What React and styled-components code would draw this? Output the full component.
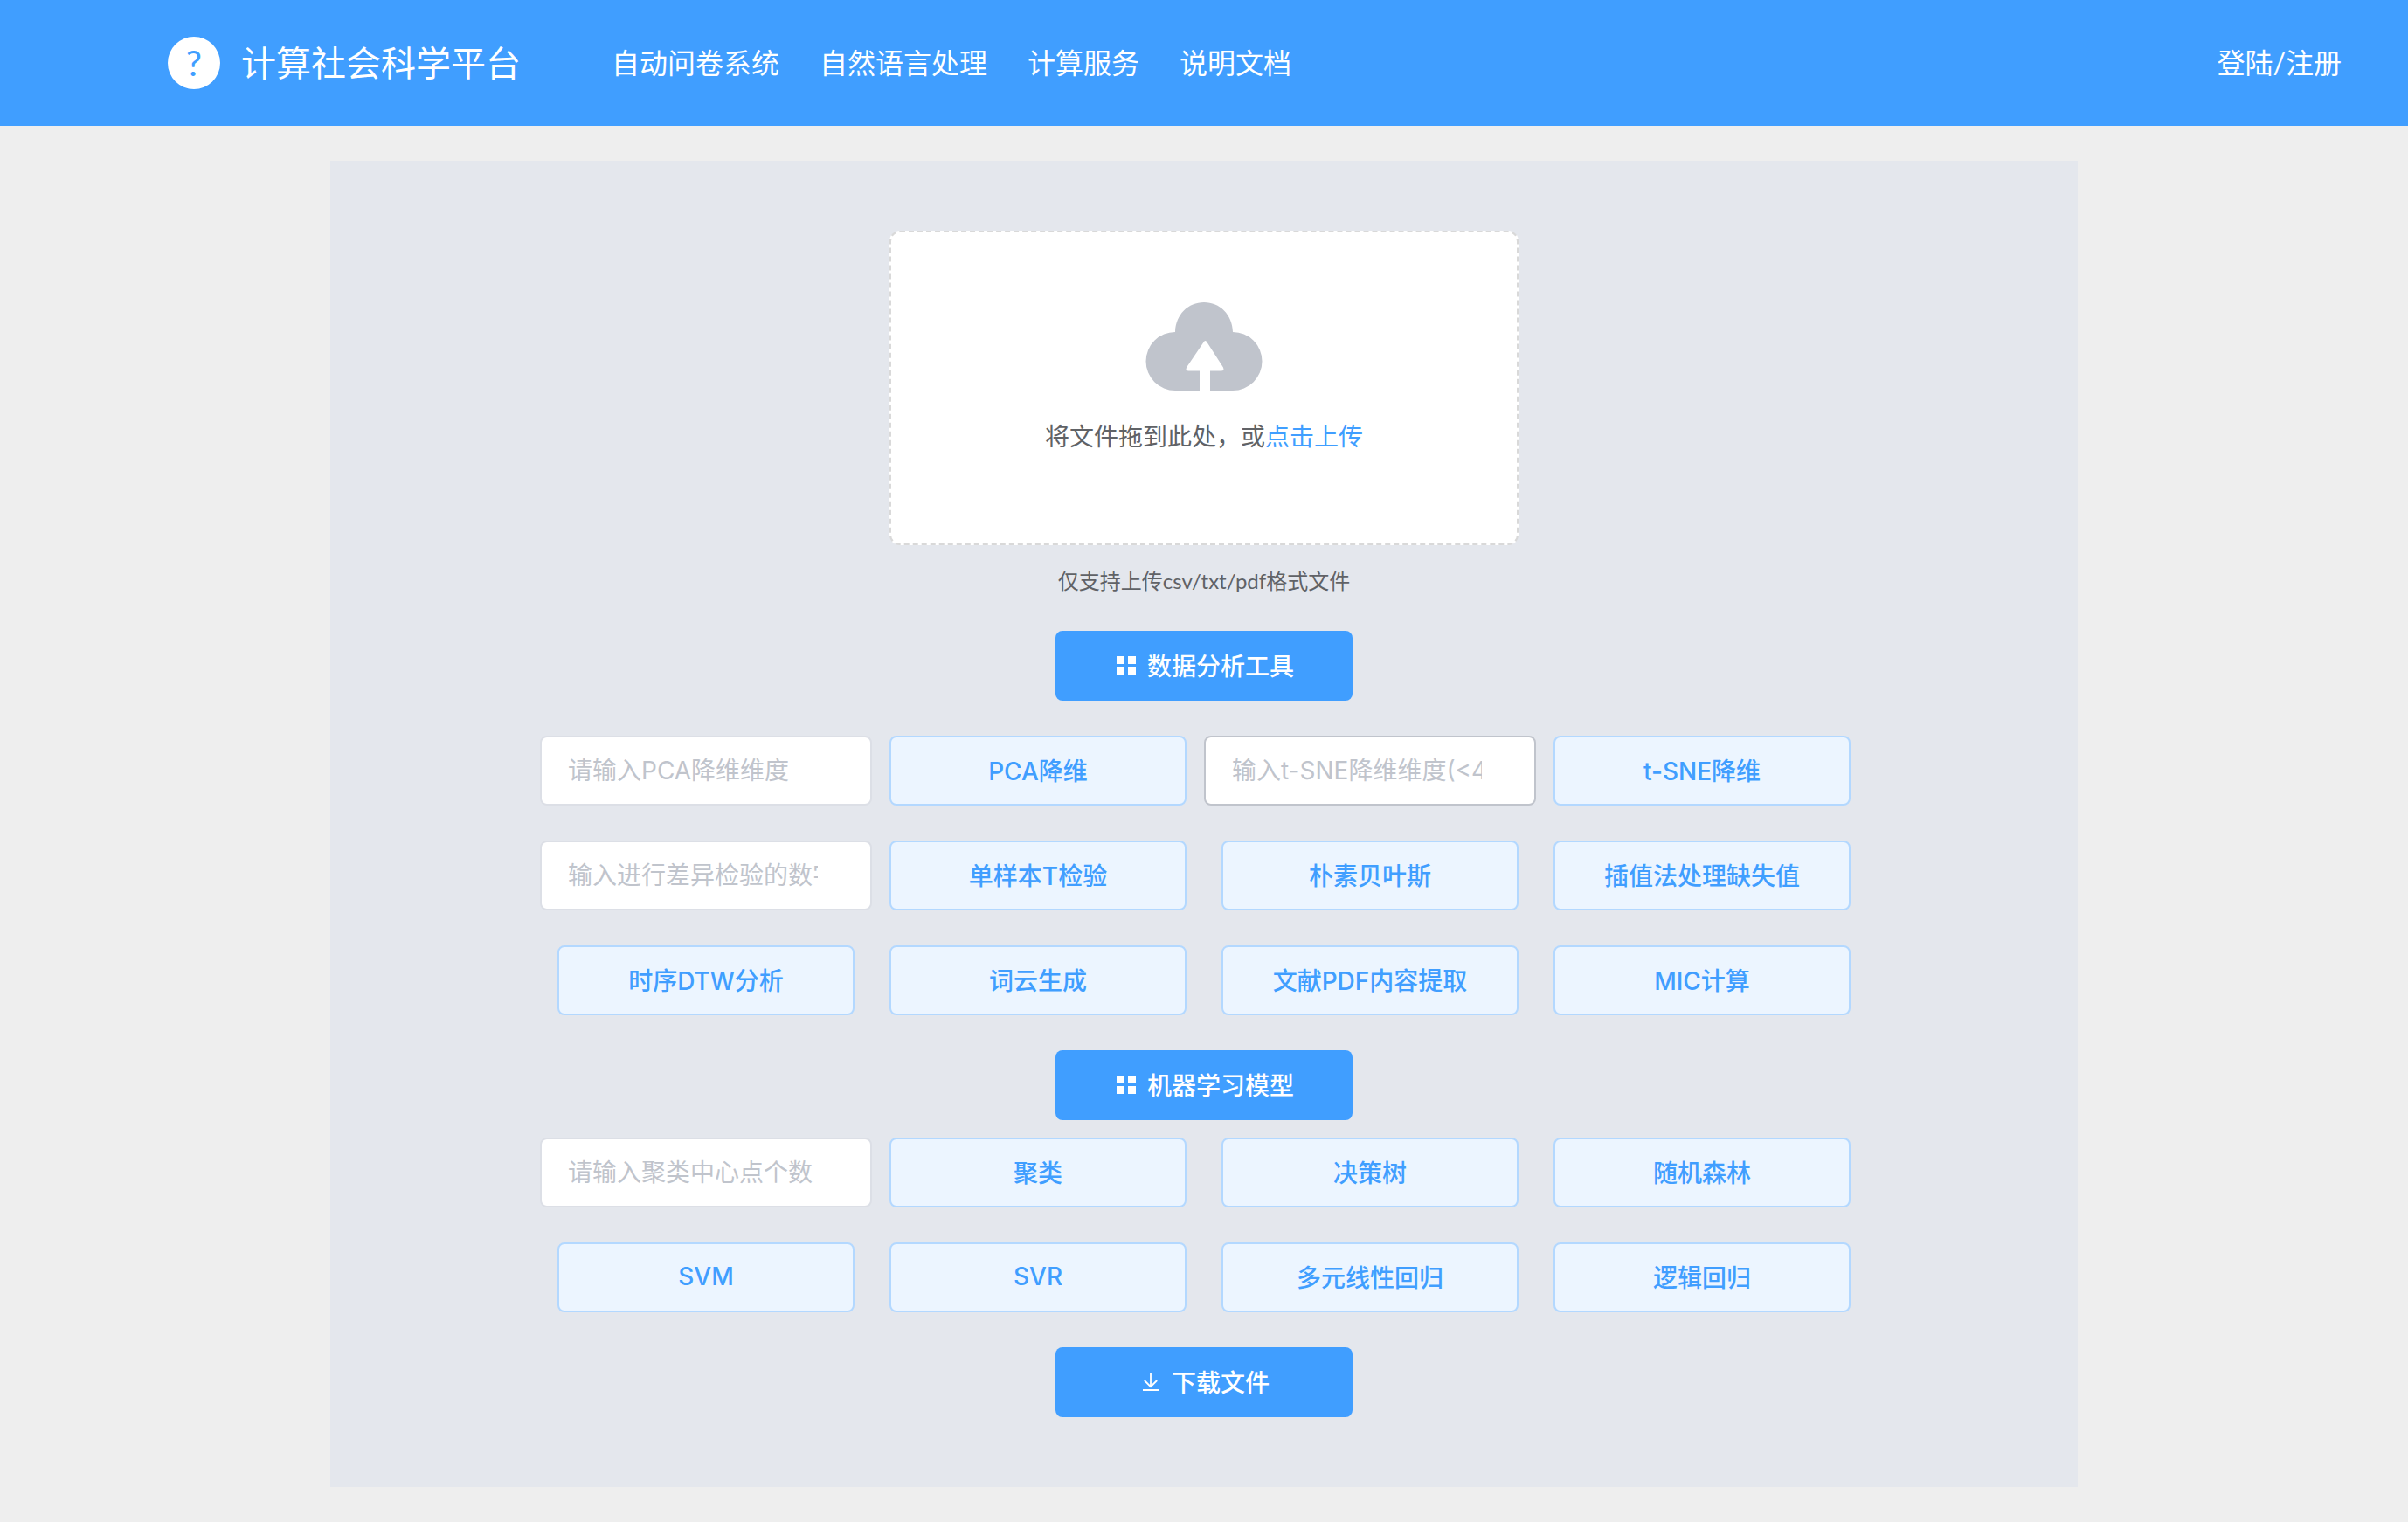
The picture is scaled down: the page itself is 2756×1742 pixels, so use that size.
import React from "react";
import styled, { createGlobalStyle, css } from "styled-components";

const GlobalStyle = createGlobalStyle`
  *, *::before, *::after { box-sizing: border-box; }
  body {
    margin: 0;
    background: #eee;
    color: #606266;
    font-family: Lato, "Noto Sans CJK SC", sans-serif;
  }
`;

const controlFont = css`
  font-family: Inter, "Noto Sans CJK SC", sans-serif;
  font-size: 28px;
`;

const Header = styled.header`
  display: flex;
  align-items: center;
  height: 144px;
  padding: 0 76px 0 192px;
  background: #409eff;
  color: #fff;
`;

const Brand = styled.a`
  display: flex;
  align-items: center;
  gap: 24px;
  color: inherit;
  font-size: 40px;
  line-height: 60px;
  text-decoration: none;
  white-space: nowrap;
`;

const Badge = styled.span`
  width: 60px;
  height: 60px;
  border-radius: 50%;
  background: #fff;
  color: #409eff;
  text-align: center;
`;

const Nav = styled.nav`
  display: flex;
  flex: 1;
  gap: 46px;
  margin-left: 104px;
`;

const HeaderLink = styled.a`
  color: inherit;
  font-size: 32px;
  line-height: 48px;
  text-decoration: none;
  white-space: nowrap;
`;

const Panel = styled.main`
  display: flex;
  flex-direction: column;
  align-items: center;
  max-width: 2000px;
  margin: 40px auto;
  padding: 80px 40px;
  background: #e4e7ed;
`;

const DropZone = styled.section`
  display: flex;
  flex-direction: column;
  align-items: center;
  width: 100%;
  max-width: 720px;
  height: 360px;
  padding-top: 80px;
  border: 2px dashed #d9d9d9;
  border-radius: 12px;
  background: #fff;
`;

const DropText = styled.p`
  margin: 32px 0 0;
  font-size: 28px;
  line-height: 40px;
`;

const UploadLink = styled.a`
  color: #409eff;
  text-decoration: none;
`;

const Hint = styled.p`
  margin: 24px 0 40px;
  font-size: 24px;
  line-height: 34px;
`;

const PrimaryButton = styled.button`
  ${controlFont}
  display: flex;
  align-items: center;
  justify-content: center;
  gap: 10px;
  width: 340px;
  height: 80px;
  padding: 0 0 2px;
  border: 0;
  border-radius: 8px;
  background: #409eff;
  color: #fff;
  font-weight: 500;
  cursor: pointer;
`;

const Tools = styled.section`
  display: grid;
  grid-template-columns: repeat(4, minmax(0, 1fr));
  gap: 40px 0;
  width: 100%;
  max-width: 1520px;
  margin: ${(p) => (p.$tight ? 20 : 40)}px 0 40px;
`;

const ToolButton = styled.button`
  ${controlFont}
  height: 80px;
  margin: 0 20px;
  padding: 0 0 2px;
  border: 2px solid #b3d8ff;
  border-radius: 8px;
  background: #ecf5ff;
  color: #409eff;
  font-weight: 500;
  cursor: pointer;
`;

const ToolInput = styled.input`
  ${controlFont}
  width: 100%;
  height: 80px;
  padding: 0 60px 0 30px;
  border: 2px solid ${(p) => (p.$active ? "#c0c4cc" : "#dcdfe6")};
  border-radius: 8px;
  background: #fff;
  color: #606266;
  &::placeholder { color: #c0c4cc; opacity: 1; }
`;

const CloudIcon = () => (
  <svg width="134" height="101" viewBox="0 0 134 101" fill="#c0c4cc" aria-hidden="true">
    <path d="M34 101A33.5 33.5 0 0 1 34 34C34.500 14 49 0 67 0S99.500 14 100 34A33.500 33.500 0 0 1 100 101H74V78.500H86.500Q91 78.500 88.800 74.200L70 45Q68.500 42.800 67 45L47.200 74.200Q45 78.500 49.500 78.500H62V101Z" />
  </svg>
);

const MenuIcon = () => (
  <svg width="28" height="28" viewBox="0 0 28 28" fill="currentColor" aria-hidden="true">
    <path d="M3 4h9v9H3zM16 4h9v9h-9zM3 16h9v9H3zM16 16h9v9h-9z" />
  </svg>
);

const DownloadIcon = () => (
  <svg width="28" height="28" viewBox="0 0 28 28" fill="none" stroke="currentColor" strokeWidth="1.8" aria-hidden="true">
    <path d="M14 4v16.500M6.800 13l7.200 7.200 7.200-7.200M5 24h18" />
  </svg>
);

const navItems = ["自动问卷系统", "自然语言处理", "计算服务", "说明文档"];

const analysisTools = [
  { placeholder: "请输入PCA降维维度" },
  { label: "PCA降维" },
  { placeholder: "输入t-SNE降维维度(<4)", active: true },
  { label: "t-SNE降维" },
  { placeholder: "输入进行差异检验的数字" },
  { label: "单样本T检验" },
  { label: "朴素贝叶斯" },
  { label: "插值法处理缺失值" },
  { label: "时序DTW分析" },
  { label: "词云生成" },
  { label: "文献PDF内容提取" },
  { label: "MIC计算" },
];

const modelTools = [
  { placeholder: "请输入聚类中心点个数" },
  { label: "聚类" },
  { label: "决策树" },
  { label: "随机森林" },
  { label: "SVM" },
  { label: "SVR" },
  { label: "多元线性回归" },
  { label: "逻辑回归" },
];

const ToolGrid = ({ items, tight }) => (
  <Tools $tight={tight}>
    {items.map((item) =>
      item.placeholder ? (
        <ToolInput
          key={item.placeholder}
          type="text"
          placeholder={item.placeholder}
          aria-label={item.placeholder}
          $active={item.active}
        />
      ) : (
        <ToolButton key={item.label} type="button">{item.label}</ToolButton>
      )
    )}
  </Tools>
);

export default function App() {
  return (
    <>
      <GlobalStyle />
      <Header>
        <Brand href="#home">
          <Badge>?</Badge>
          计算社会科学平台
        </Brand>
        <Nav>
          {navItems.map((item) => (
            <HeaderLink key={item} href={`#${item}`}>{item}</HeaderLink>
          ))}
        </Nav>
        <HeaderLink href="#login">登陆/注册</HeaderLink>
      </Header>
      <Panel>
        <DropZone>
          <CloudIcon />
          <DropText>
            将文件拖到此处，或<UploadLink href="#upload">点击上传</UploadLink>
          </DropText>
        </DropZone>
        <Hint>仅支持上传csv/txt/pdf格式文件</Hint>
        <PrimaryButton type="button"><MenuIcon />数据分析工具</PrimaryButton>
        <ToolGrid items={analysisTools} />
        <PrimaryButton type="button"><MenuIcon />机器学习模型</PrimaryButton>
        <ToolGrid items={modelTools} tight />
        <PrimaryButton type="button"><DownloadIcon />下载文件</PrimaryButton>
      </Panel>
    </>
  );
}
